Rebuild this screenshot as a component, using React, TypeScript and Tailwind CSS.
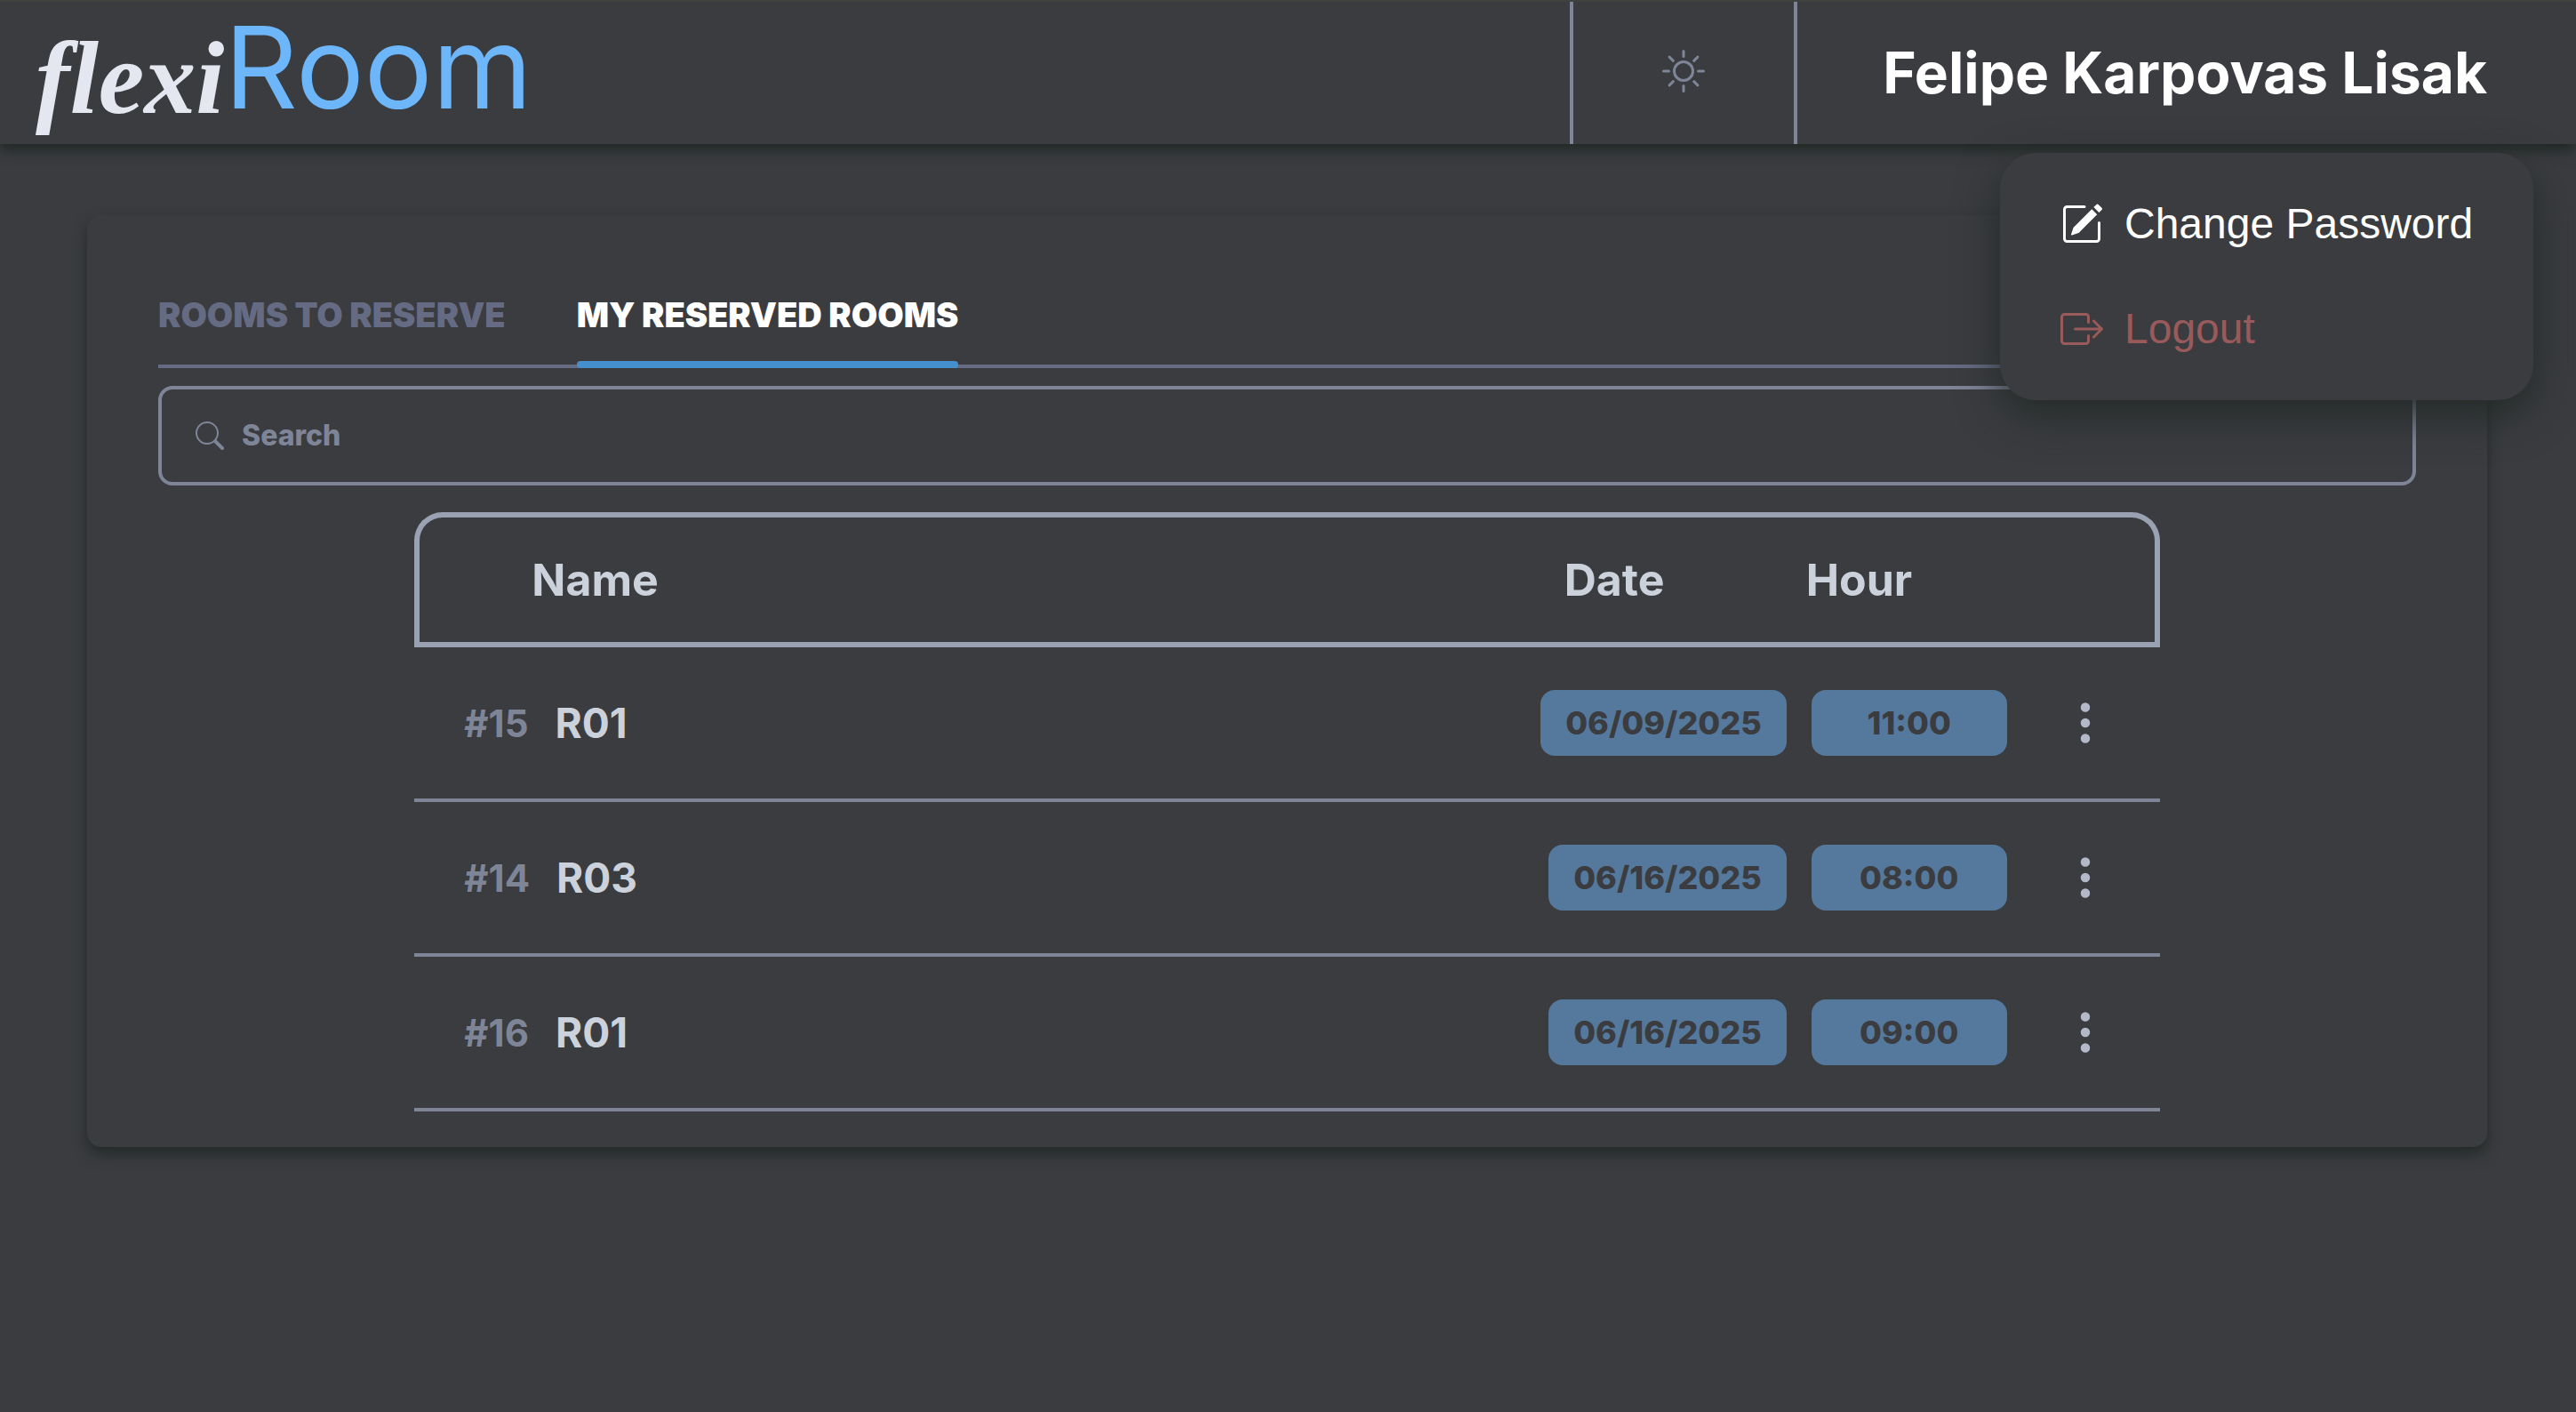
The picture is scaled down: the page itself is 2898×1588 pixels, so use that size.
import React from "react";
import { BsSun, BsPencilSquare, BsBoxArrowRight, BsSearch, BsThreeDotsVertical } from "react-icons/bs";

const reservations = [
  { id: 15, room: "R01", date: "06/09/2025", hour: "11:00" },
  { id: 14, room: "R03", date: "06/16/2025", hour: "08:00" },
  { id: 16, room: "R01", date: "06/16/2025", hour: "09:00" },
];

function Header() {
  return (
    <header className="relative z-10 flex h-[162px] items-stretch border-t-2 border-[#40423f] bg-[#3b3c40] shadow-[0_8px_12px_#232a27]">
      <a href="#" aria-label="flexiRoom" className="flex items-start pl-[40px] whitespace-nowrap">
        <span className="font-['Liberation_Serif',serif] text-[116px] leading-[172px] font-bold text-[#e4e7f0] italic">flexi</span>
        <span className="font-[Inter,sans-serif] text-[128px] leading-[148px] text-[#6db6f9]">Room</span>
      </a>
      <button type="button" aria-label="Toggle theme" className="ml-auto flex w-[256px] items-center justify-center border-x-4 border-[#7e8597] pb-[4px] text-[#7e8597]">
        <BsSun className="size-12" />
      </button>
      <div className="relative flex items-center pr-[100px] pl-[96px]">
        <button type="button" aria-expanded="true" className="font-[Inter,sans-serif] text-[64px] leading-[80px] font-bold text-white">
          Felipe Karpovas Lisak
        </button>
        <ul className="absolute top-[170px] right-[48px] flex w-[600px] flex-col gap-[38px] rounded-[40px] bg-[#3b3c40] px-[68px] py-[40px] font-['Liberation_Sans',sans-serif] text-[48px] leading-[80px] shadow-[0_16px_48px_#232a27]">
          <li>
            <button type="button" className="flex items-center gap-6 whitespace-nowrap text-white">
              <BsPencilSquare className="size-12" />
              Change Password
            </button>
          </li>
          <li>
            <button type="button" className="flex items-center gap-6 whitespace-nowrap text-[#985a5a]">
              <BsBoxArrowRight className="size-12" />
              Logout
            </button>
          </li>
        </ul>
      </div>
    </header>
  );
}

function Tabs() {
  return (
    <div role="tablist" className="flex gap-[80px] border-b-4 border-[#656b83] text-[38px] leading-[60px] font-black">
      <button type="button" role="tab" aria-selected="false" className="pb-[26px] text-[#656b83]">
        ROOMS TO RESERVE
      </button>
      <button type="button" role="tab" aria-selected="true" className="relative pb-[26px] text-white">
        MY RESERVED ROOMS
        <span className="absolute inset-x-0 -bottom-1 h-2 rounded-sm bg-[#468fcd]" />
      </button>
    </div>
  );
}

function ReservationTable() {
  return (
    <table className="mx-auto mt-[30px] w-[77.3%] border-separate border-spacing-0 text-left">
      <thead>
        <tr className="h-[152px] text-[50px] font-bold text-[#ccd2db]">
          <th className="rounded-tl-[32px] border-y-6 border-l-6 border-[#9aa1b2] pl-[126px]">Name</th>
          <th className="w-[300px] border-y-6 border-[#9aa1b2] pl-[36px]">Date</th>
          <th className="w-[248px] border-y-6 border-[#9aa1b2] pl-[8px]">Hour</th>
          <th className="w-[158px] rounded-tr-[32px] border-y-6 border-r-6 border-[#9aa1b2]" aria-label="Actions" />
        </tr>
      </thead>
      <tbody>
        {reservations.map((r) => (
          <tr key={r.id} className="h-[174px] *:border-b-4 *:border-[#7e8597]">
            <td className="pl-[56px]">
              <div className="flex items-center gap-[30px] font-bold">
                <span className="text-[42px] text-[#7e8597]">#{r.id}</span>
                <span className="text-[46px] text-[#ccd2db]">{r.room}</span>
              </div>
            </td>
            <td className="pr-[14px]">
              <span className="ml-auto block w-fit rounded-2xl bg-[#55799d] px-[28px] text-[36px] leading-[74px] font-extrabold text-[#3b3c40]">{r.date}</span>
            </td>
            <td className="pl-[14px]">
              <span className="block w-[220px] rounded-2xl bg-[#55799d] text-center text-[36px] leading-[74px] font-extrabold text-[#3b3c40]">{r.hour}</span>
            </td>
            <td className="pl-[46px]">
              <button type="button" aria-label={`Options for reservation ${r.id}`} className="block text-[#b3b9c8]">
                <BsThreeDotsVertical className="size-14" />
              </button>
            </td>
          </tr>
        ))}
      </tbody>
    </table>
  );
}

export default function App() {
  return (
    <div className="min-h-screen bg-[#3b3c40] font-[Inter,sans-serif]">
      <Header />
      <main className="mt-[80px] mr-[100px] ml-[98px] rounded-2xl bg-[#3b3c40] px-[80px] pt-[82px] pb-[40px] shadow-[0_8px_16px_#232a27]">
        <Tabs />
        <label className="mt-[20px] flex h-[112px] items-center gap-[20px] rounded-2xl border-4 border-[#7e8597] px-[38px] text-[#7e8597]">
          <BsSearch className="size-8" />
          <input type="search" aria-label="Search" placeholder="Search" className="flex-1 bg-transparent text-[32px] leading-[48px] font-extrabold outline-none placeholder:text-[#7e8597]" />
        </label>
        <ReservationTable />
      </main>
    </div>
  );
}
